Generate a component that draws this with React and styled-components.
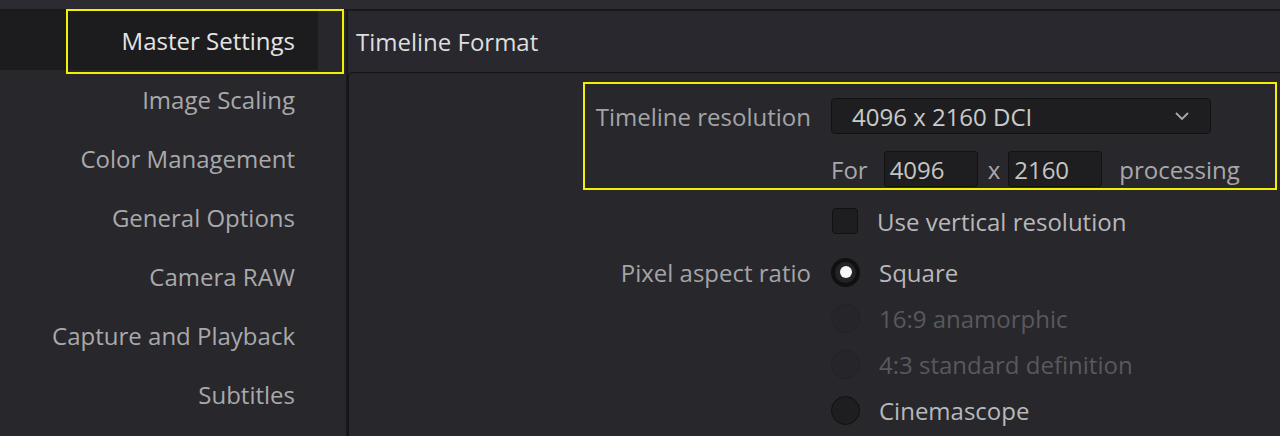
import React from "react";
import styled, { createGlobalStyle } from "styled-components";

const GlobalStyle = createGlobalStyle`
  html, body {
    margin: 0;
    padding: 0;
    background: #28272c;
  }
  body {
    font-family: "Open Sans", "Noto Sans", sans-serif;
  }
`;

const Page = styled.div`
  position: relative;
  width: 1280px;
  height: 436px;
  overflow: hidden;
  background: #28272c;
  display: flex;
  flex-direction: column;
`;

const TopStrip = styled.div`
  height: 9px;
  background: #2c2b31;
  border-bottom: 2px solid #19191b;
  flex-shrink: 0;
`;

const Body = styled.div`
  flex: 1;
  display: flex;
`;

const Sidebar = styled.div`
  width: 346px;
  border-right: 2px solid #18181a;
  background: #28272c;
  display: flex;
  flex-direction: column;
`;

const NavItem = styled.div`
  width: 318px;
  height: 59px;
  box-sizing: border-box;
  padding-right: 23px;
  padding-bottom: 1px;
  display: flex;
  align-items: center;
  justify-content: flex-end;
  font-size: 24px;
  color: ${(p) => (p.$active ? "#e4e4e4" : "#a9a9ab")};
  background: ${(p) => (p.$active ? "#1c1c1e" : "transparent")};
`;

const Main = styled.div`
  flex: 1;
  display: flex;
  flex-direction: column;
`;

const Header = styled.div`
  height: 61px;
  display: flex;
  align-items: center;
  padding-left: 8px;
  font-size: 24px;
  color: #dedede;
  background: #29282e;
`;

const Panel = styled.div`
  flex: 1;
  border-top: 1px solid #141416;
  border-left: 1px solid #141416;
  border-top-left-radius: 5px;
  background: #28272c;
  display: flex;
  flex-direction: column;
`;

const Row = styled.div`
  display: grid;
  grid-template-columns: 462px 1fr;
  column-gap: 20px;
  align-items: center;
  height: ${(p) => p.$h || 46}px;
  margin-top: ${(p) => p.$mt || 0}px;
`;

const Label = styled.div`
  text-align: right;
  font-size: 24px;
  color: #a4a4a6;
`;

const Controls = styled.div`
  display: flex;
  align-items: center;
`;

const Select = styled.div`
  width: 380px;
  height: 36px;
  box-sizing: border-box;
  background: #1e1e20;
  border: 1px solid #121213;
  border-radius: 4px;
  display: flex;
  align-items: center;
  justify-content: space-between;
  padding: 0 20px 0 20px;
  font-size: 24px;
  color: #cacaca;
`;

const Field = styled.div`
  width: 94px;
  height: 36px;
  box-sizing: border-box;
  background: #1e1e20;
  border: 1px solid #121213;
  border-radius: 3px;
  display: flex;
  align-items: center;
  padding-left: 5px;
  font-size: 24px;
  color: #c4c4c4;
`;

const Text = styled.span`
  font-size: 24px;
  color: ${(p) => (p.$dim ? "#5b5b5e" : "#a8a8aa")};
  margin: 0 ${(p) => p.$mr || 0}px 0 ${(p) => p.$ml || 0}px;
`;

const OptionLabel = styled.span`
  font-size: 24px;
  margin-left: 19px;
  color: ${(p) => (p.$dim ? "#59595c" : "#b8b8ba")};
`;

const Checkbox = styled.div`
  width: 26px;
  height: 26px;
  box-sizing: border-box;
  margin-left: 1px;
  background: #1e1e20;
  border: 1px solid #111112;
  border-radius: 4px;
`;

const Radio = styled.div`
  width: 29px;
  height: 29px;
  box-sizing: border-box;
  border-radius: 50%;
  display: flex;
  align-items: center;
  justify-content: center;
  background: ${(p) =>
    p.$state === "disabled" ? "#26252a" : p.$state === "on" ? "#232325" : "#1e1e20"};
  border: ${(p) =>
    p.$state === "disabled"
      ? "1px solid #232226"
      : p.$state === "on"
      ? "4px solid #101011"
      : "1px solid #111112"};
  &::after {
    content: "";
    display: ${(p) => (p.$state === "on" ? "block" : "none")};
    width: 12px;
    height: 12px;
    border-radius: 50%;
    background: #f6f6f6;
  }
`;

const Highlight = styled.div`
  position: absolute;
  left: ${(p) => p.$x}px;
  top: ${(p) => p.$y}px;
  width: ${(p) => p.$w}px;
  height: ${(p) => p.$h}px;
  box-sizing: border-box;
  border: 2px solid #f2f200;
  pointer-events: none;
`;

const Chevron = () => (
  <svg width="16" height="10" viewBox="0 0 16 10">
    <path d="M2 2 L8 8 L14 2" fill="none" stroke="#a9a9ab" strokeWidth="1.8" />
  </svg>
);

const navItems = [
  "Master Settings",
  "Image Scaling",
  "Color Management",
  "General Options",
  "Camera RAW",
  "Capture and Playback",
  "Subtitles",
];

const aspectOptions = [
  { label: "Square", state: "on" },
  { label: "16:9 anamorphic", state: "disabled" },
  { label: "4:3 standard definition", state: "disabled" },
  { label: "Cinemascope", state: "off" },
];

export default function App() {
  return (
    <Page>
      <GlobalStyle />
      <TopStrip />
      <Body>
        <Sidebar>
          {navItems.map((item, i) => (
            <NavItem key={item} $active={i === 0}>
              {item}
            </NavItem>
          ))}
        </Sidebar>
        <Main>
          <Header>Timeline Format</Header>
          <Panel>
            <Row $h={36} $mt={25}>
              <Label>Timeline resolution</Label>
              <Controls>
                <Select>
                  <span>4096 x 2160 DCI</span>
                  <Chevron />
                </Select>
              </Controls>
            </Row>
            <Row $h={36} $mt={17}>
              <div />
              <Controls>
                <Text $mr={16}>For</Text>
                <Field>4096</Field>
                <Text $ml={10} $mr={8}>x</Text>
                <Field>2160</Field>
                <Text $ml={17}>processing</Text>
              </Controls>
            </Row>
            <Row $mt={11}>
              <div />
              <Controls>
                <Checkbox />
                <OptionLabel>Use vertical resolution</OptionLabel>
              </Controls>
            </Row>
            {aspectOptions.map((opt, i) => (
              <Row key={opt.label} $mt={i === 0 ? 5 : 0}>
                <Label>{i === 0 ? "Pixel aspect ratio" : ""}</Label>
                <Controls>
                  <Radio $state={opt.state} />
                  <OptionLabel $dim={opt.state === "disabled"}>{opt.label}</OptionLabel>
                </Controls>
              </Row>
            ))}
          </Panel>
        </Main>
      </Body>
      <Highlight $x={66} $y={9} $w={278} $h={65} />
      <Highlight $x={583} $y={82} $w={694} $h={108} />
    </Page>
  );
}
